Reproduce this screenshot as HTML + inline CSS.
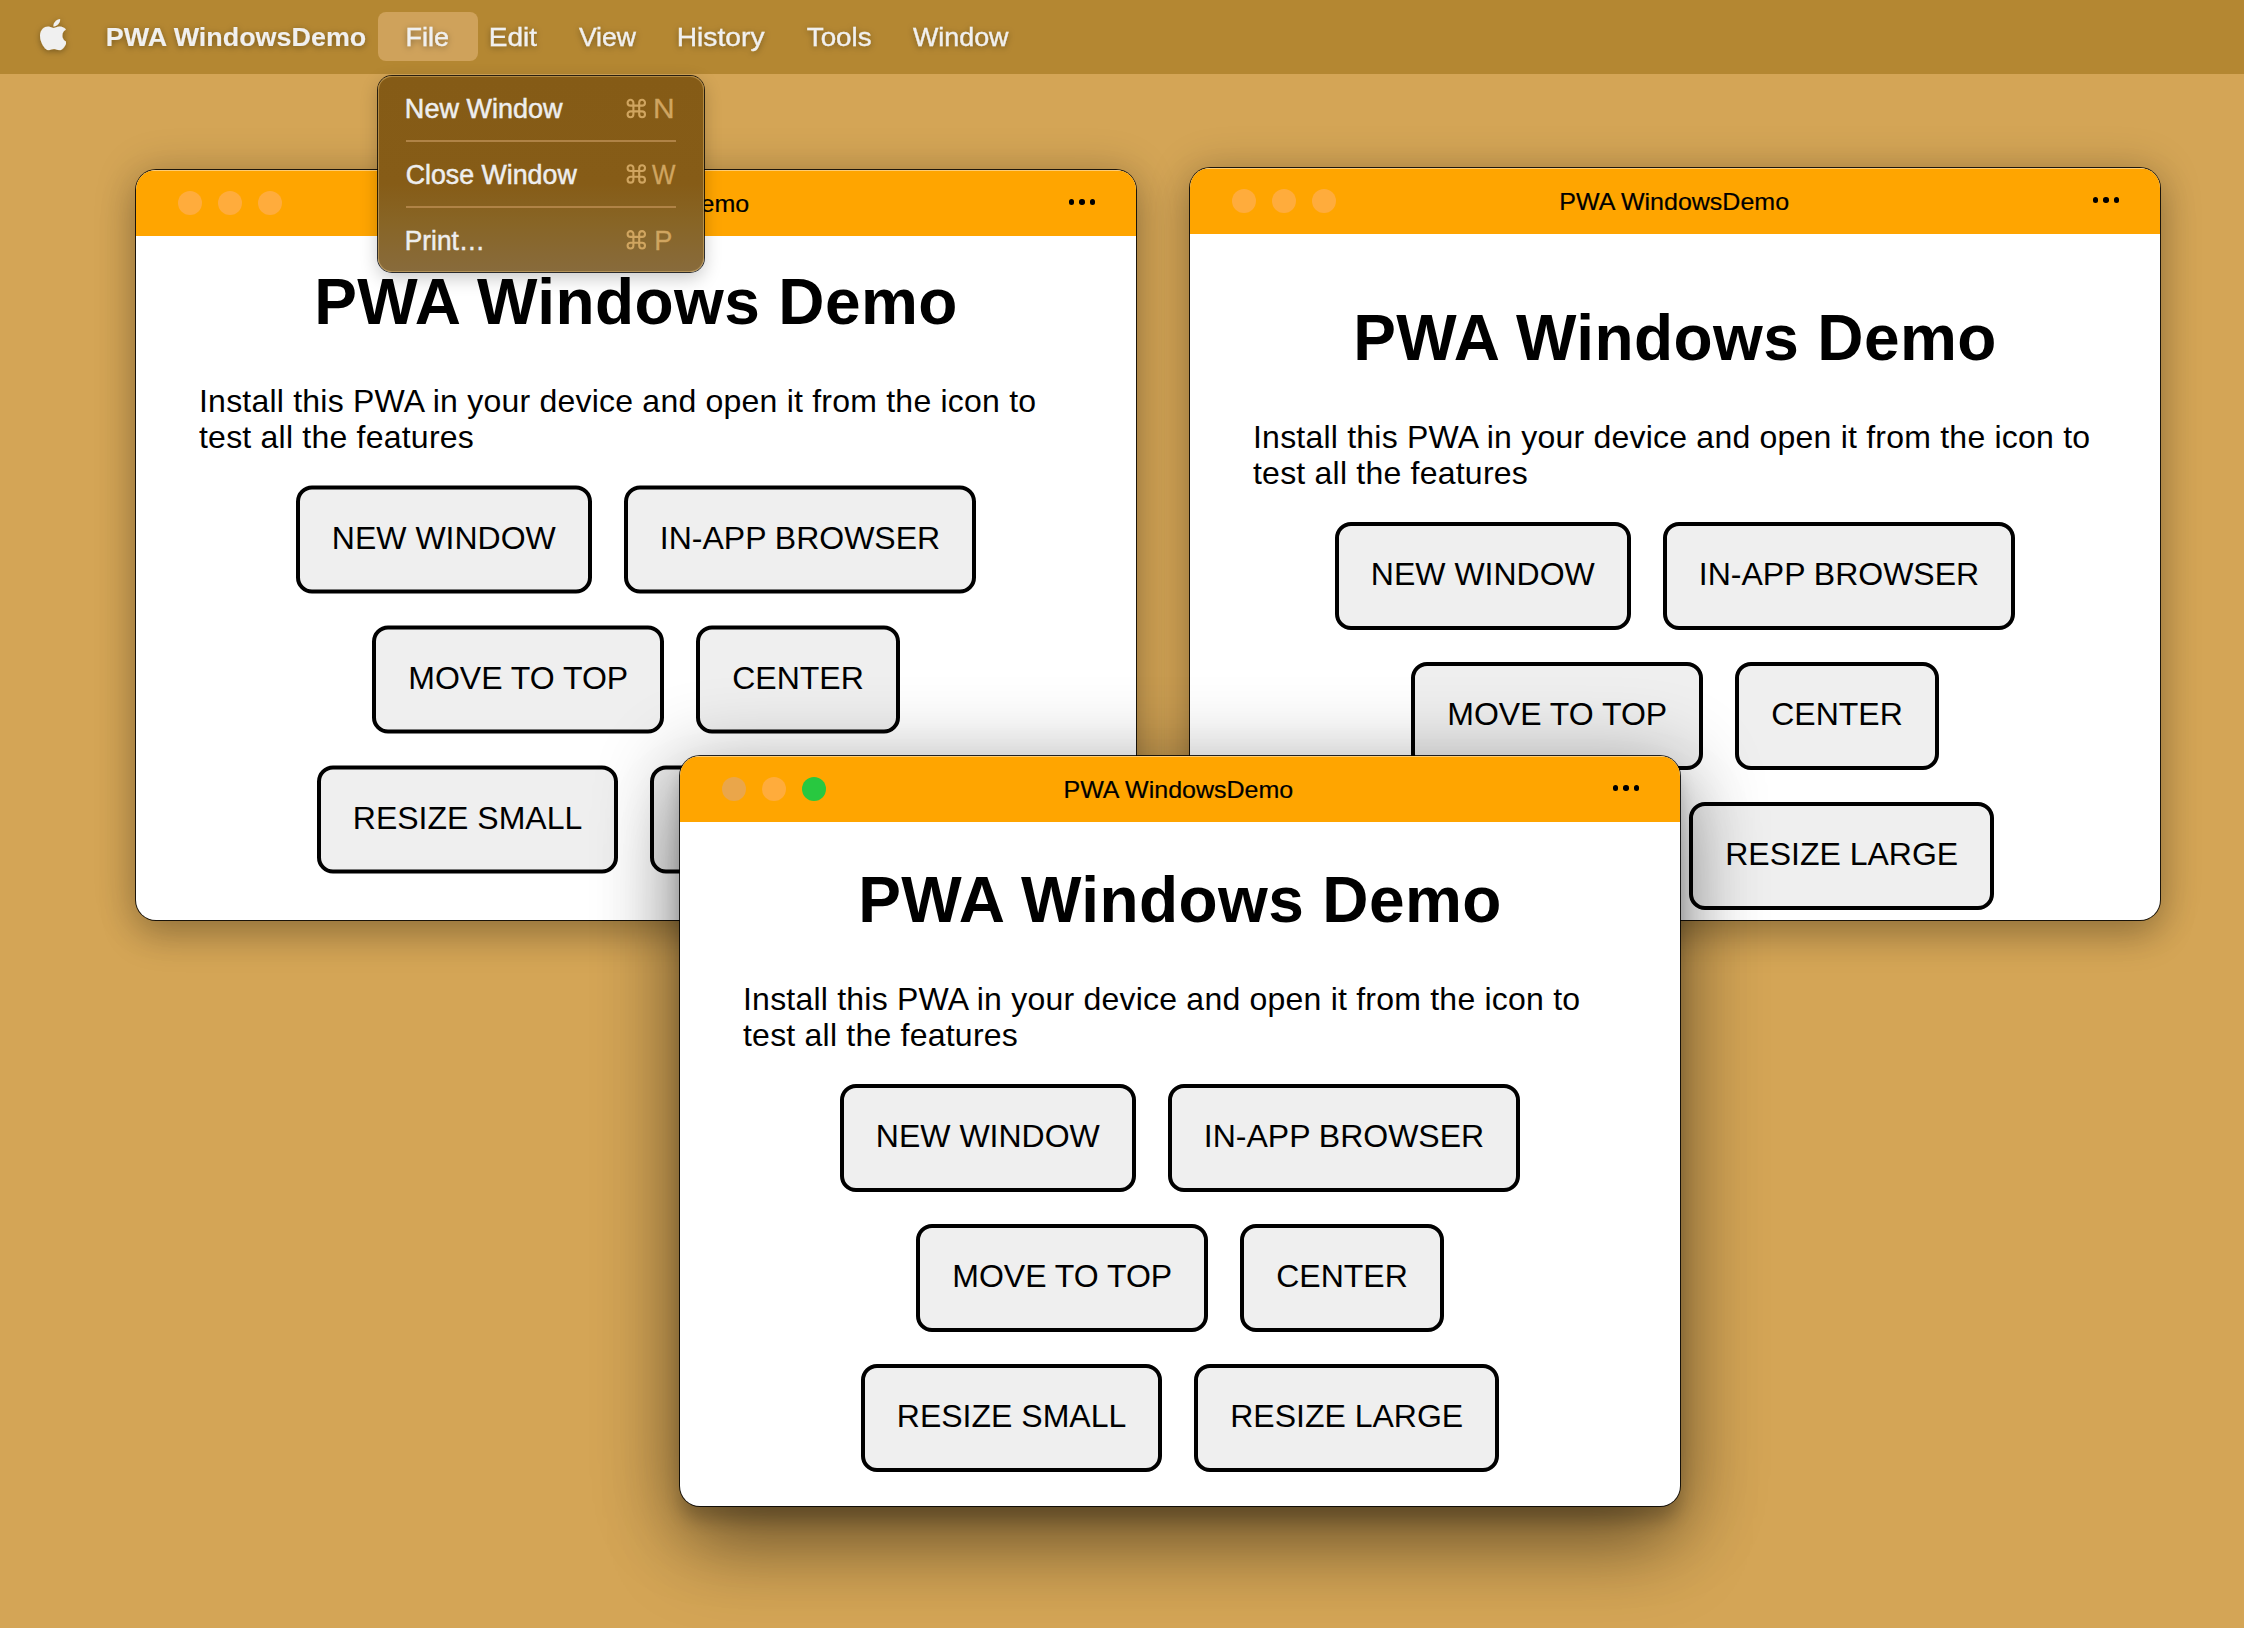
<!DOCTYPE html>
<html><head><meta charset="utf-8"><title>PWA WindowsDemo</title>
<style>
html,body{margin:0;padding:0;width:2244px;height:1628px;overflow:hidden}
body{background:#d4a556;font-family:"Liberation Sans",sans-serif;position:relative}
svg text{font-family:"Liberation Sans",sans-serif}
.menubar{position:absolute;left:0;top:0;width:2244px;height:74px;background:#b48732}
.filehl{position:absolute;left:378px;top:12px;width:100px;height:49px;border-radius:8px;background:#cfa25b}
.mbsvg{position:absolute;left:0;top:0}
.win{position:absolute;border-radius:20px;background:#fff;overflow:hidden;
  box-shadow:0 0 0 1px rgba(0,0,0,.85),0 0 44px rgba(0,0,0,.18),0 16px 36px rgba(0,0,0,.22)}
.win.wc{box-shadow:0 0 0 1px rgba(0,0,0,.85),0 12px 80px 8px rgba(0,0,0,.30),0 14px 16px rgba(0,0,0,.18),0 50px 80px -10px rgba(0,0,0,.34)}
.tb{position:absolute;left:0;top:0;right:0;height:66px;background:#ffa500;box-shadow:inset 0 1px 0 rgba(255,255,255,.45)}
.light{position:absolute;top:21px;width:24px;height:24px;border-radius:50%;background:#ffac3c}
.light.green{background:#28c840}
.dot{position:absolute;top:29.15px;width:5.5px;height:5.5px;border-radius:50%;background:#000}
.tsvg{position:absolute;left:0;top:0}
.content{position:absolute;left:0;top:66px;right:0;height:700px}
h1{position:absolute;left:0;right:0;top:41.3px;margin:0;text-align:center;font-size:64px;line-height:74px;font-weight:bold;color:#000;letter-spacing:0.4px}
p{position:absolute;left:63px;right:65px;top:159.3px;margin:0;font-size:32px;line-height:36px;color:#000;letter-spacing:0.22px}
.row{position:absolute;left:0;right:0;display:flex;justify-content:center;gap:32px}
button{font-family:"Liberation Sans",sans-serif;font-size:32px;line-height:36px;padding:30px 32px 34px;margin:0;height:108px;border:4px solid #000;border-radius:16px;background:#efefef;color:#000;box-sizing:border-box}
.menu{position:absolute;left:378px;top:76px;width:326px;height:196px;border-radius:14px;
  background:linear-gradient(#855b16 0%,#865c17 55%,#886526 75%,#886b3c 100%);
  box-shadow:0 0 0 1px rgba(0,0,0,.8),inset 0 0 0 1px rgba(255,215,140,.38),0 6px 18px rgba(0,0,0,.22)}
.sep{position:absolute;left:28px;width:270px;height:2px;background:#b08346}
</style></head><body>

<div class="win wa" style="left:136px;top:170px;width:1000px;height:750px">
  <div class="tb"><div class="light" style="left:42px"></div><div class="light" style="left:82px"></div><div class="light" style="left:122px"></div><div class="dot" style="left:932.75px"></div><div class="dot" style="left:943.25px"></div><div class="dot" style="left:953.75px"></div>
    <svg class="tsvg" width="1000" height="66" viewBox="136 170 1000 66"><text x="519.53" y="211.70" font-size="24" font-weight="normal" textLength="229.75" lengthAdjust="spacingAndGlyphs" fill="#000" stroke="#000" stroke-width="0.2" >PWA WindowsDemo</text></svg>
  </div>
  <div class="content" style="transform:translateY(-12.5px)">
    <h1>PWA Windows Demo</h1>
    <p>Install this PWA in your device and open it from the icon to test all the features</p>
    <div class="row" style="top:261.9px"><button>NEW WINDOW</button><button>IN-APP BROWSER</button></div>
    <div class="row" style="top:401.9px"><button>MOVE TO TOP</button><button>CENTER</button></div>
    <div class="row" style="top:541.9px"><button>RESIZE SMALL</button><button>RESIZE LARGE</button></div>
  </div>
</div>

<div class="win wb" style="left:1190px;top:168px;width:970px;height:752px">
  <div class="tb"><div class="light" style="left:42px"></div><div class="light" style="left:82px"></div><div class="light" style="left:122px"></div><div class="dot" style="left:902.75px"></div><div class="dot" style="left:913.25px"></div><div class="dot" style="left:923.75px"></div>
    <svg class="tsvg" width="970" height="66" viewBox="1190 168 970 66"><text x="1559.33" y="209.50" font-size="24" font-weight="normal" textLength="229.75" lengthAdjust="spacingAndGlyphs" fill="#000" stroke="#000" stroke-width="0.2" >PWA WindowsDemo</text></svg>
  </div>
  <div class="content" style="transform:translateY(26px)">
    <h1>PWA Windows Demo</h1>
    <p>Install this PWA in your device and open it from the icon to test all the features</p>
    <div class="row" style="top:261.9px"><button>NEW WINDOW</button><button>IN-APP BROWSER</button></div>
    <div class="row" style="top:401.9px"><button>MOVE TO TOP</button><button>CENTER</button></div>
    <div class="row" style="top:541.9px"><button>RESIZE SMALL</button><button>RESIZE LARGE</button></div>
  </div>
</div>

<div class="win wc" style="left:680px;top:756px;width:1000px;height:750px">
  <div class="tb"><div class="light" style="left:42px;background:#eaa64a"></div><div class="light" style="left:82px"></div><div class="light green" style="left:122px"></div><div class="dot" style="left:932.75px"></div><div class="dot" style="left:943.25px"></div><div class="dot" style="left:953.75px"></div>
    <svg class="tsvg" width="1000" height="66" viewBox="680 756 1000 66"><text x="1063.53" y="797.80" font-size="24" font-weight="normal" textLength="229.75" lengthAdjust="spacingAndGlyphs" fill="#000" stroke="#000" stroke-width="0.2" >PWA WindowsDemo</text></svg>
  </div>
  <div class="content" style="transform:translateY(0px)">
    <h1>PWA Windows Demo</h1>
    <p>Install this PWA in your device and open it from the icon to test all the features</p>
    <div class="row" style="top:261.9px"><button>NEW WINDOW</button><button>IN-APP BROWSER</button></div>
    <div class="row" style="top:401.9px"><button>MOVE TO TOP</button><button>CENTER</button></div>
    <div class="row" style="top:541.9px"><button>RESIZE SMALL</button><button>RESIZE LARGE</button></div>
  </div>
</div>
<div class="menubar"><div class="filehl"></div></div>
<svg class="mbsvg" width="2244" height="74" viewBox="0 0 2244 74">
<defs><filter id="ts" x="-10%" y="-50%" width="120%" height="200%"><feDropShadow dx="0" dy="1.5" stdDeviation="3" flood-color="#000" flood-opacity=".35"/></filter></defs>
<g filter="url(#ts)">
<svg x="40" y="19" width="26" height="31.3" viewBox="4 32 365 448" preserveAspectRatio="none"><path d="M318.7 268.7c-.2-36.7 16.4-64.4 50-84.8-18.8-26.9-47.2-41.7-84.7-44.6-35.5-2.8-74.3 20.7-88.5 20.7-15 0-49.4-19.7-76.4-19.7C63.3 141.2 4 184.8 4 273.5q0 39.3 14.4 81.2c12.8 36.7 59 126.7 107.2 125.2 25.2-.6 43-17.9 75.8-17.9 31.8 0 48.3 17.9 76.4 17.9 48.6-.7 90.4-82.5 102.6-119.3-65.2-30.7-61.7-90-61.7-91.9zm-56.6-164.2c27.3-32.4 24.8-61.9 24-72.5-24.1 1.4-52 16.4-67.9 34.9-17.5 19.8-27.8 44.3-25.6 71.9 26.1 2 49.9-11.4 69.5-34.3z" fill="#f0f0f0"/></svg>
<text x="105.89" y="45.70" font-size="26" font-weight="bold" textLength="260.38" lengthAdjust="spacingAndGlyphs" fill="#f0f0f0" >PWA WindowsDemo</text>
<text x="405.47" y="45.70" font-size="26" font-weight="normal" textLength="43.52" lengthAdjust="spacingAndGlyphs" fill="#f0f0f0" stroke="#f0f0f0" stroke-width="0.3" >File</text>
<text x="488.89" y="45.70" font-size="26" font-weight="normal" textLength="48.18" lengthAdjust="spacingAndGlyphs" fill="#f0f0f0" stroke="#f0f0f0" stroke-width="0.3" >Edit</text>
<text x="578.90" y="45.70" font-size="26" font-weight="normal" textLength="57.04" lengthAdjust="spacingAndGlyphs" fill="#f0f0f0" stroke="#f0f0f0" stroke-width="0.3" >View</text>
<text x="676.66" y="45.70" font-size="26" font-weight="normal" textLength="87.88" lengthAdjust="spacingAndGlyphs" fill="#f0f0f0" stroke="#f0f0f0" stroke-width="0.3" >History</text>
<text x="806.76" y="45.70" font-size="26" font-weight="normal" textLength="64.85" lengthAdjust="spacingAndGlyphs" fill="#f0f0f0" stroke="#f0f0f0" stroke-width="0.3" >Tools</text>
<text x="912.90" y="45.70" font-size="26" font-weight="normal" textLength="95.62" lengthAdjust="spacingAndGlyphs" fill="#f0f0f0" stroke="#f0f0f0" stroke-width="0.3" >Window</text>
</g>
</svg>
<div class="menu">
  <div class="sep" style="top:64px"></div>
  <div class="sep" style="top:130px"></div>
</div>
<svg class="mbsvg" width="2244" height="300" viewBox="0 0 2244 300" style="top:0">

<text x="404.86" y="118.20" font-size="27" font-weight="normal" textLength="157.74" lengthAdjust="spacingAndGlyphs" fill="#eeeeee" stroke="#eeeeee" stroke-width="0.5" >New Window</text>
<text x="653.12" y="118.20" font-size="27" font-weight="normal" textLength="21.63" lengthAdjust="spacingAndGlyphs" fill="#d0a560" stroke="#d0a560" stroke-width="0.3" >N</text>
<g transform="translate(626.8 99.0)"><path d="M6.6 6.6H12.4V12.4H6.6Z M6.6 6.6V3.7A2.9 2.9 0 1 0 3.7 6.6H6.6 M12.4 6.6H15.3A2.9 2.9 0 1 0 12.4 3.7V6.6 M12.4 12.4V15.3A2.9 2.9 0 1 0 15.3 12.4H12.4 M6.6 12.4H3.7A2.9 2.9 0 1 0 6.6 15.3V12.4" fill="none" stroke="#d0a560" stroke-width="2.1"/></g>
<text x="405.66" y="183.60" font-size="27" font-weight="normal" textLength="171.06" lengthAdjust="spacingAndGlyphs" fill="#eeeeee" stroke="#eeeeee" stroke-width="0.5" >Close Window</text>
<text x="651.90" y="183.60" font-size="27" font-weight="normal" textLength="23.48" lengthAdjust="spacingAndGlyphs" fill="#d0a560" stroke="#d0a560" stroke-width="0.3" >W</text>
<g transform="translate(626.8 164.4)"><path d="M6.6 6.6H12.4V12.4H6.6Z M6.6 6.6V3.7A2.9 2.9 0 1 0 3.7 6.6H6.6 M12.4 6.6H15.3A2.9 2.9 0 1 0 12.4 3.7V6.6 M12.4 12.4V15.3A2.9 2.9 0 1 0 15.3 12.4H12.4 M6.6 12.4H3.7A2.9 2.9 0 1 0 6.6 15.3V12.4" fill="none" stroke="#d0a560" stroke-width="2.1"/></g>
<text x="404.83" y="249.50" font-size="27" font-weight="normal" textLength="80.16" lengthAdjust="spacingAndGlyphs" fill="#eeeeee" stroke="#eeeeee" stroke-width="0.5" >Print…</text>
<text x="654.16" y="249.50" font-size="27" font-weight="normal" textLength="18.10" lengthAdjust="spacingAndGlyphs" fill="#d0a560" stroke="#d0a560" stroke-width="0.3" >P</text>
<g transform="translate(626.8 230.3)"><path d="M6.6 6.6H12.4V12.4H6.6Z M6.6 6.6V3.7A2.9 2.9 0 1 0 3.7 6.6H6.6 M12.4 6.6H15.3A2.9 2.9 0 1 0 12.4 3.7V6.6 M12.4 12.4V15.3A2.9 2.9 0 1 0 15.3 12.4H12.4 M6.6 12.4H3.7A2.9 2.9 0 1 0 6.6 15.3V12.4" fill="none" stroke="#d0a560" stroke-width="2.1"/></g>
</svg>
</body></html>
